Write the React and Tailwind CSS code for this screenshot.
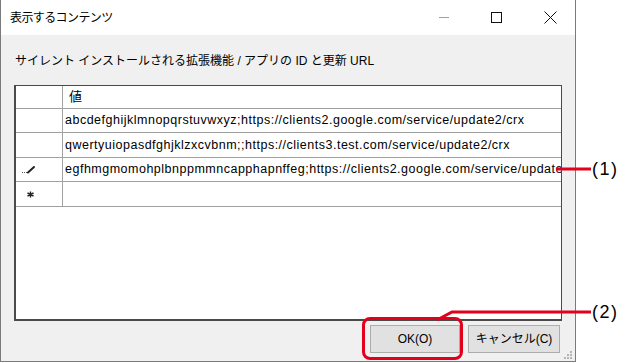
import React from "react";

const rows = [
  { mark: "", text: "abcdefghijklmnopqrstuvwxyz;https://clients2.google.com/service/update2/crx", h: "h-[24px]" },
  { mark: "", text: "qwertyuiopasdfghjklzxcvbnm;;https://clients3.test.com/service/update2/crx", h: "h-[25px]" },
  { mark: "edit", text: "egfhmgmomohplbnppmmncapphapnffeg;https://clients2.google.com/service/update2/crx", h: "h-[24px]" },
  { mark: "new", text: "", h: "h-[25px]" },
];

const PencilMark = () => (
  <svg width="14" height="9" viewBox="0 0 14 9">
    <rect x="0" y="7" width="1" height="1" fill="#555" />
    <rect x="2" y="7" width="1" height="1" fill="#555" />
    <rect x="4" y="7" width="1" height="1" fill="#555" />
    <path d="M6 7.5 L12 2" stroke="#222" strokeWidth="2" strokeLinecap="round" />
  </svg>
);

const NewMark = () => (
  <svg width="7" height="7" viewBox="0 0 7 7">
    <path d="M3.5 0.5 V6.5 M0.5 2 L6.5 5 M0.5 5 L6.5 2" stroke="#222" strokeWidth="1.4" />
  </svg>
);

const App = () => {
  return (
    <div
      className="relative w-[626px] h-[363px] bg-white overflow-hidden text-black"
      style={{ fontFamily: '"Liberation Sans", "Noto Sans CJK JP", sans-serif' }}
    >
      <div className="w-[576px] h-[362px] flex flex-col border-l border-r border-b border-[#7a7a7a] bg-[#f0f0f0]">
        {/* title bar */}
        <div className="h-[35px] shrink-0 bg-white flex items-center">
          <span className="pl-[9px] text-[12px] tracking-[-0.6px]">表示するコンテンツ</span>
          <div className="ml-auto flex items-center gap-[42px] pr-[18px]">
            <div className="w-[10px] h-px bg-[#a0a0a0]" />
            <div className="w-[11px] h-[11px] border border-[#111]" />
            <svg width="13" height="13" viewBox="0 0 13 13">
              <path d="M0.5 0.5 L12.5 12.5 M12.5 0.5 L0.5 12.5" stroke="#111" strokeWidth="1" />
            </svg>
          </div>
        </div>

        {/* label */}
        <div className="pl-[14px] pt-[18px] h-[50px] shrink-0 text-[12px] leading-[16px]">
          サイレント インストールされる拡張機能 / アプリの ID と更新 URL
        </div>

        {/* grid */}
        <div className="mx-[13px] h-[236px] shrink-0 bg-white border border-[#4a4a4a] border-l-2 border-b-2">
          <div className="flex h-[23px] border-b border-[#a0a0a0]">
            <div className="w-[47px] shrink-0 border-r border-[#a0a0a0]" />
            <div className="pl-[6px] flex items-center text-[13px]">値</div>
          </div>
          {rows.map((r, i) => (
            <div key={i} className={`flex ${r.h} border-b border-[#a0a0a0]`}>
              <div className="w-[47px] shrink-0 border-r border-[#a0a0a0] flex items-center justify-center">
                {r.mark === "edit" && <div className="ml-[-20px]"><PencilMark /></div>}
                {r.mark === "new" && <div className="ml-[-17px]"><NewMark /></div>}
              </div>
              <div className="flex-1 min-w-0 overflow-hidden pl-[2px] flex items-center text-[12.5px] tracking-[0.5px] whitespace-nowrap">
                {r.text}
              </div>
            </div>
          ))}
        </div>

        {/* buttons */}
        <div className="flex justify-end gap-[8px] pr-[15px] pt-[4px]">
          <button className="w-[90px] h-[28px] bg-[#e1e1e1] border border-[#adadad] text-[12px]">
            OK(O)
          </button>
          <button className="w-[92px] h-[28px] bg-[#e1e1e1] border border-[#adadad] text-[12px]">
            キャンセル(C)
          </button>
        </div>
      </div>

      {/* resize grip */}
      <svg className="absolute left-[563px] top-[350px]" width="10" height="10" viewBox="0 0 10 10">
        <rect x="7" y="1" width="2" height="2" fill="#b5b5b5" />
        <rect x="4" y="4" width="2" height="2" fill="#b5b5b5" />
        <rect x="7" y="4" width="2" height="2" fill="#b5b5b5" />
        <rect x="1" y="7" width="2" height="2" fill="#b5b5b5" />
        <rect x="4" y="7" width="2" height="2" fill="#b5b5b5" />
        <rect x="7" y="7" width="2" height="2" fill="#b5b5b5" />
      </svg>

      {/* callouts */}
      <div className="absolute left-[362px] top-[317px] w-[101px] h-[43px] rounded-[8px] border-[3px] border-[#e2001a]" />
      <svg className="absolute left-0 top-0 pointer-events-none" width="626" height="363">
        <path d="M556 169 H591" stroke="#e2001a" strokeWidth="3" fill="none" />
        <path d="M437 320 L452 312 H591" stroke="#e2001a" strokeWidth="3" fill="none" />
      </svg>
      <div className="absolute left-[592px] top-[157px] text-[18px] leading-[24px] tracking-[1.5px]">(1)</div>
      <div className="absolute left-[592px] top-[300px] text-[18px] leading-[24px] tracking-[1.5px]">(2)</div>
    </div>
  );
};

export default App;
